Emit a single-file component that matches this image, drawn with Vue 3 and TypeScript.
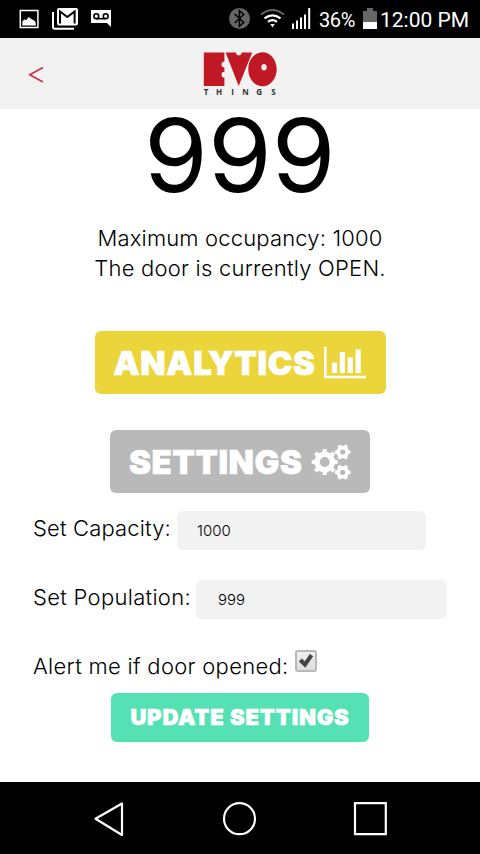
<script setup lang="ts">
import { ref } from 'vue'

interface Gear { cx: number; cy: number; r: number; hole: number; teeth: number; phase: number }

const capacity = ref('1000')
const population = ref('999')
const alertOnOpen = ref(true)

const gears: Gear[] = [
  { cx: 13.7, cy: 20, r: 13.2, hole: 4.9, teeth: 8, phase: 0 },
  { cx: 31.7, cy: 10, r: 8, hole: 2.6, teeth: 6, phase: 0 },
  { cx: 31.7, cy: 30.3, r: 8, hole: 2.6, teeth: 6, phase: 0 },
]

function gearPath(g: Gear): string {
  const step = (Math.PI * 2) / g.teeth
  const root = g.r * 0.79
  const pts: string[] = []
  for (let i = 0; i < g.teeth; i++) {
    const a = g.phase + i * step
    const corners: [number, number][] = [[root, -0.28], [g.r, -0.18], [g.r, 0.18], [root, 0.28]]
    for (const [rad, off] of corners) {
      const t = a + off * step
      pts.push(`${(g.cx + rad * Math.cos(t)).toFixed(2)} ${(g.cy + rad * Math.sin(t)).toFixed(2)}`)
    }
  }
  const h = g.hole
  return `M${pts.join('L')}ZM${g.cx - h} ${g.cy}a${h} ${h} 0 1 0 ${2 * h} 0a${h} ${h} 0 1 0 ${-2 * h} 0Z`
}
</script>

<template>
  <div class="screen">
    <div class="status">
      <svg class="notif" width="96" height="26" viewBox="0 0 96 26">
        <path d="M2.300 4.400h17.600v17H2.300z" fill="none" stroke="#fff" stroke-width="1.500" />
        <path d="M4.300 19.500v-4l2-2 2 .5 2.500-3 2.500 2 2 1 2 1.500 .700 4z" fill="#fff" />
        <path d="M41 2h17q2 0 2 2v13.500q0 2-2 2H41q-2 0-2-2V4q0-2 2-2z" fill="#fff" />
        <path d="M35 6v15q0 1.800 1.800 1.800H56" fill="none" stroke="#fff" stroke-width="2" />
        <path d="M42 17.500V5.500l7.300 5.500 7.300-5.500v12" fill="none" stroke="#000" stroke-width="2" />
        <path d="M73 4h20v17l-4-4H73z" fill="#fff" />
        <g fill="none" stroke="#000" stroke-width="1.600"><circle cx="78.300" cy="10.200" r="2.400" /><circle cx="87.700" cy="10.200" r="2.400" /><path d="M78.300 12.700h9.400" /></g>
      </svg>
      <div class="status-right">
        <svg width="88" height="24" viewBox="0 0 88 24">
          <circle cx="11.500" cy="12.500" r="10.500" fill="#666" />
          <path d="M6.700 8l9 8.500-4.300 3.800V4.700l4.300 3.800-9 8.500" fill="none" stroke="#000" stroke-width="1.500" />
          <path d="M33 8.500q11.500-9 23 0" fill="none" stroke="#666" stroke-width="2" />
          <g fill="none" stroke="#fff" stroke-width="2.200"><path d="M36.500 12.300q8-6 16 0" /><path d="M40 15.800q4.500-3.200 9 0" /></g>
          <path d="M42.300 18h4.400l-2.200 3.500z" fill="#fff" />
          <path d="M64 17.500h2V23h-2zM68 14.500h2V23h-2zM72 11.500h2V23h-2zM76 8.500h2V23h-2zM80.200 2h2v21h-2z" fill="#fff" />
        </svg>
        <span class="pct">36%</span>
        <svg class="battery" width="14" height="22" viewBox="0 0 14 22">
          <path d="M4 0h6v3h4v18H0V3h4z" fill="#666" /><path d="M0 14h14v7H0z" fill="#fff" />
        </svg>
        <span class="clock">12:00 PM</span>
      </div>
    </div>

    <header class="bar">
      <svg class="back" width="16" height="18" viewBox="0 0 16 18"><path d="M15 1.500L1.800 8.800 15 16" fill="none" stroke="#c93442" stroke-width="1.700" /></svg>
      <svg class="logo" width="76" height="46" viewBox="0 0 76 46">
        <path d="M.8.400h20.600v9.200a2.900 2.900 0 0 0 0 5.800v4.400a2.900 2.900 0 0 0 0 5.800V34H.8z" fill="#c01824" />
        <path d="M22.600.400h10.400a2.800 2.800 0 0 0 5.600 0h10.600L35.700 34z" fill="#c01824" />
        <path fill-rule="evenodd" d="M59.500.2C67.500.2 73.700 8 73.700 17.200S67.500 34.200 59.500 34.200 45.300 26.400 45.300 17.200 51.500.2 59.500.2zM61 12c-1.800 0-2.700 1.500-2.700 3.200s.9 3.200 2.700 3.200 2.700-1.500 2.700-3.200-.9-3.200-2.700-3.200z" fill="#c01824" />
        <text class="things" y="42.800" x="0.800 13 28.200 39.200 53.200 68.200">THINGS</text>
      </svg>
    </header>

    <main>
      <div class="count">999</div>
      <div class="info"><span class="l1">Maximum occupancy: 1000</span><span class="l2">The door is currently OPEN.</span></div>

      <button class="btn analytics">
        <span>ANALYTICS</span>
        <svg width="42" height="37" viewBox="0 0 2048 1792"><path fill="#fff" d="M640 896v512h-256v-512h256zm384-512v1024h-256v-1024h256zm1024 1152v128h-2048v-1536h128v1408h1920zm-640-896v768h-256v-768h256zm384-384v1152h-256v-1152h256z" /></svg>
      </button>
      <button class="btn settings">
        <span>SETTINGS</span>
        <svg width="40" height="40" viewBox="0 0 40 40"><path v-for="(g, i) in gears" :key="i" :d="gearPath(g)" fill="#fff" fill-rule="evenodd" /></svg>
      </button>

      <form @submit.prevent>
        <label class="row"><span class="t-cap">Set Capacity:</span><input v-model="capacity" class="field in-cap" type="text" /></label>
        <label class="row"><span class="t-pop">Set Population:</span><input v-model="population" class="field in-pop" type="text" /></label>
        <label class="row alert"><span class="t-alert">Alert me if door opened:</span>
          <span class="check"><input v-model="alertOnOpen" type="checkbox" /><svg v-if="alertOnOpen" width="18" height="18" viewBox="0 0 18 18"><path d="M1.800 9.500l3-3 3 2.800 5-7.300 3.400 2.300L8.300 15.800z" fill="#444" /></svg></span>
        </label>
        <button class="btn update"><span>UPDATE SETTINGS</span></button>
      </form>
    </main>

    <nav>
      <svg width="480" height="72" viewBox="0 0 480 72" fill="none" stroke="#fff" stroke-width="2.200">
        <path d="M122 21.500v31.500L95.500 36.700z" stroke-linejoin="round" /><circle cx="239.500" cy="36.700" r="15.500" /><path d="M355 21.200h30.800v31H355z" />
      </svg>
    </nav>
  </div>
</template>

<style>
body { margin: 0; background: #fff; }
</style>
<style scoped>
* { box-sizing: border-box; }
.screen { width: 480px; height: 854px; display: flex; flex-direction: column; background: #fff; color: #000; font-family: Inter, sans-serif; overflow: hidden; white-space: nowrap; }
.status { height: 38px; background: #000; color: #fff; display: flex; justify-content: space-between; padding: 6px 11px 0 18px; font: 21px/28px Roboto, sans-serif; }
.status-right { display: flex; }
.pct { width: 37px; margin-left: 3px; font-size: 20px; letter-spacing: -.4px; }
.battery { margin: 2px 3px 0 7px; }
.clock { width: 89px; }
.bar { height: 71px; background: #f2f2f2; display: flex; padding-left: 28px; }
.back { margin-top: 28px; }
.logo { margin: 14px 0 0 158.5px; }
.things { font: bold 8px "Open Sans", sans-serif; fill: #333; }
main { height: 673px; display: flex; flex-direction: column; align-items: center; }
.count { height: 114px; font-size: 102px; line-height: 92px; font-weight: 380; transform: scaleX(1.01); }
.info { height: 108px; display: flex; flex-direction: column; align-items: center; font-size: 22px; line-height: 30px; font-weight: 300; }
.l1 { letter-spacing: .16px; }
.l2 { letter-spacing: .23px; }
.btn { display: flex; align-items: center; border: 0; border-radius: 6px; color: #fff; font-family: Inter, sans-serif; font-weight: 900; padding: 0 19px; justify-content: space-between; -webkit-text-stroke: .6px #fff; }
.analytics { width: 291px; height: 63px; background: #ebd53a; font-size: 33px; letter-spacing: .6px; flex: none; padding-right: 20px; }
.settings { width: 260px; height: 63px; margin-top: 36px; background: #b9b9b9; font-size: 33px; letter-spacing: .5px; flex: none; }
form { width: 480px; margin-top: 18px; padding-left: 33px; font-size: 22px; font-weight: 300; }
.row { display: flex; height: 69px; line-height: 34px; }
.field { height: 39px; border: 0; border-radius: 6px; background: #f2f2f2; padding: 0 20px; font: 300 15px Inter, sans-serif; color: #000; outline: 0; }
.t-cap { width: 144px; letter-spacing: .15px; }
.in-cap { width: 249px; }
.t-pop { width: 163px; letter-spacing: .3px; }
.in-pop { width: 251px; padding-left: 22px; }
.row.alert { height: 44px; }
.t-alert { width: 262px; letter-spacing: .3px; }
.check { display: grid; width: 22px; height: 22px; margin-top: 1px; border: 2px solid #b8b8b8; border-radius: 3px; background: linear-gradient(#eee, #ddd); }
.check input { display: none; }
.update { width: 258px; height: 49px; margin-left: 78px; background: #55e1b4; font-size: 22px; letter-spacing: .85px; padding: 0 0 1px; justify-content: center; }
nav { height: 72px; background: #000; }
</style>
